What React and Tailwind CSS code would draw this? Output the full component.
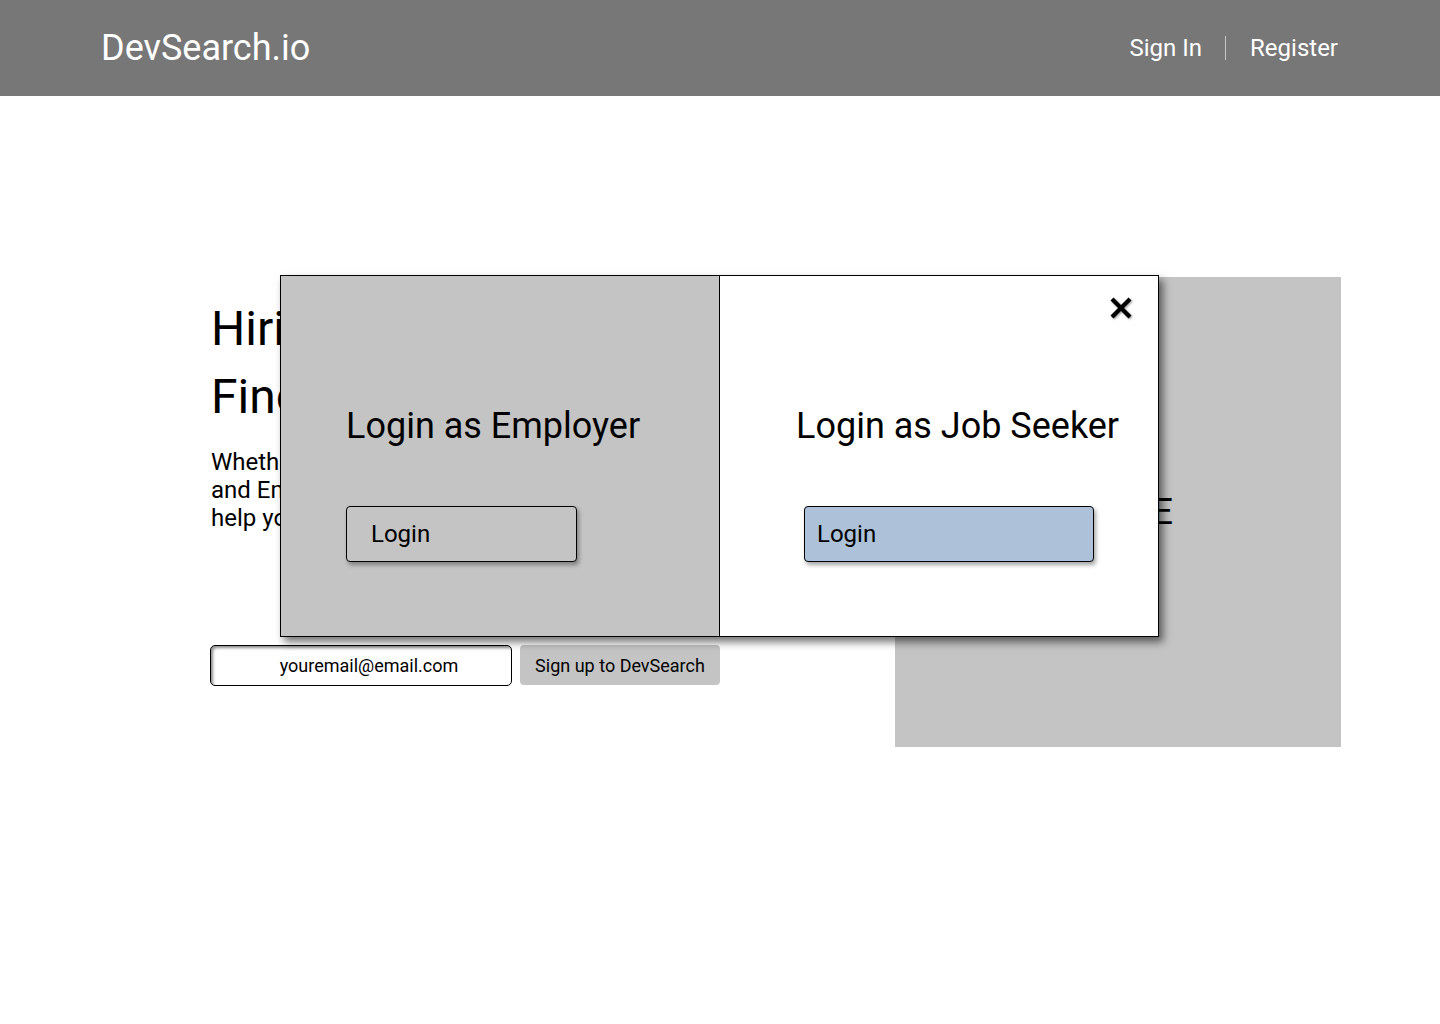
import React from 'react'

const font = { fontFamily: 'Roboto, "Liberation Sans", sans-serif' }

function Header(){
  return (
    <header className="h-24 bg-[#777777] flex items-center justify-between pl-[101px] pr-[102px] text-white">
      <div className="text-[36px] leading-none">DevSearch.io</div>
      <nav className="flex items-center text-[24px] leading-none">
        <a className="cursor-pointer">Sign In</a>
        <span className="ml-[23px] mr-[24px] w-px h-[24px] bg-[#c8c8c8]"></span>
        <a className="cursor-pointer">Register</a>
      </nav>
    </header>
  )
}

function Hero(){
  return (
    <section className="flex pl-[211px] pt-[181px]">
      <div className="w-[684px]">
        <h1 className="mt-[18px] text-[48px] leading-[68px] text-black">
          Hiring Developers?<br />Find them at DevSearch.
        </h1>
        <p className="mt-[17px] text-[24px] leading-[28px] text-black">
          Whether you are a Developer looking for your next job<br />
          and Employers looking for talent, DevSearch can<br />
          help you find the perfect match.
        </p>
        <div className="mt-[113px] -ml-px flex items-start">
          <input
            className="w-[302px] h-[41px] border border-black rounded-[5px] shadow-[inset_2px_2px_3px_rgba(0,0,0,0.45)] text-center pl-[16px] text-[18px] text-black placeholder-black outline-none"
            placeholder="youremail@email.com"
          />
          <button className="ml-[8px] w-[200px] h-[40px] bg-[#c4c4c4] rounded-[4px] text-[18px] text-black">
            Sign up to DevSearch
          </button>
        </div>
      </div>
      <div className="w-[446px] h-[470px] bg-[#c4c4c4] flex items-center justify-center text-[36px] text-black">
        IMAGE
      </div>
    </section>
  )
}

function LoginModal(){
  return (
    <div className="absolute left-[280px] top-[275px] w-[879px] h-[362px] border border-black flex shadow-[4px_5px_8px_rgba(0,0,0,0.55)]">
      <div className="w-[439px] bg-[#c4c4c4] border-r border-black pl-[65px] pt-[128px]">
        <h2 className="text-[36px] leading-[44px] text-black">Login as Employer</h2>
        <button className="mt-[58px] w-[231px] h-[56px] text-left pl-[24px] border border-black rounded-[4px] bg-[#c4c4c4] text-[24px] text-black shadow-[2px_3px_4px_rgba(0,0,0,0.35)]">
          Login
        </button>
      </div>
      <div className="flex-1 bg-white relative pt-[128px]">
        <button className="absolute right-[25px] top-[20px] w-[24px] h-[24px]">
          <svg viewBox="0 0 24 24" width="24" height="24" className="drop-shadow-[1px_1px_1px_rgba(0,0,0,0.4)]">
            <path d="M3 3 L21 21 M21 3 L3 21" stroke="black" strokeWidth="4.2" strokeLinecap="butt" fill="none" />
          </svg>
        </button>
        <h2 className="ml-[76px] text-[36px] leading-[44px] text-black">Login as Job Seeker</h2>
        <button className="ml-[84px] mt-[58px] w-[290px] h-[56px] text-left pl-[12px] border border-black rounded-[4px] bg-[#adc2d8] text-[24px] text-black shadow-[2px_3px_4px_rgba(0,0,0,0.35)]">
          Login
        </button>
      </div>
    </div>
  )
}

export default function App(){
  return (
    <div className="relative w-[1440px] h-[1024px] bg-white overflow-hidden" style={font}>
      <Header />
      <Hero />
      <LoginModal />
    </div>
  )
}
